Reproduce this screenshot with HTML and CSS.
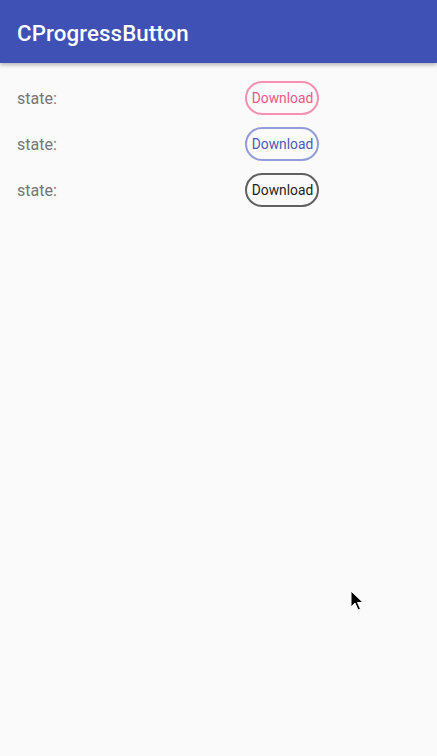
FILE: index.html
```html
<!DOCTYPE html>
<html>
<head>
<meta charset="utf-8">
<link rel="stylesheet" href="styles.css">
</head>
<body>
<header class="toolbar"><span class="title">CProgressButton</span></header>
<main class="content">
  <div class="row"><span class="label">state:</span><button class="btn btn-pink">Download</button></div>
  <div class="row"><span class="label">state:</span><button class="btn btn-indigo">Download</button></div>
  <div class="row"><span class="label">state:</span><button class="btn btn-dark">Download</button></div>
</main>
<svg class="cursor" width="14" height="22" viewBox="0 0 14 22"><path d="M1 1 L1 17 L5 13 L8 20 L10.5 19 L7.5 12.5 L13 12.5 Z" fill="#000" stroke="#fff" stroke-width="1"/></svg>
</body>
</html>
```
FILE: styles.css
```css
html, body { margin: 0; padding: 0; }
body {
  width: 437px; height: 756px; background: #fafafa;
  font-family: Roboto, "Noto Sans", sans-serif;
  position: relative; overflow: hidden;
}
.toolbar {
  height: 63px; background: #3f51b5;
  box-shadow: 0 2px 4px rgba(0,0,0,0.28);
  display: flex; align-items: center; padding-left: 17px; padding-top: 2px; box-sizing: border-box;
  position: relative; z-index: 1;
}
.title { color: #fff; font-size: 22.3px; font-weight: 500; letter-spacing: 0.1px; }
.content { padding-top: 18px; display: flex; flex-direction: column; gap: 12px; }
.row { display: flex; align-items: center; height: 34px; }
.label { width: 245px; padding-left: 17px; box-sizing: border-box; color: #757575; font-size: 16px; }
.btn {
  width: 74px; height: 34px; box-sizing: border-box; border-radius: 17px;
  background: transparent; border: 2px solid; padding: 0 0 0 1px;
  font-family: Roboto, sans-serif; font-size: 13.8px;
  display: flex; align-items: center; justify-content: center;
}
.btn-pink { border-color: #f78fb0; color: #f0558a; }
.btn-indigo { border-color: #939cd8; color: #4a59b8; }
.btn-dark { border-color: #606060; color: #1e1e1e; }
.cursor { position: absolute; left: 350px; top: 590px; }
```
